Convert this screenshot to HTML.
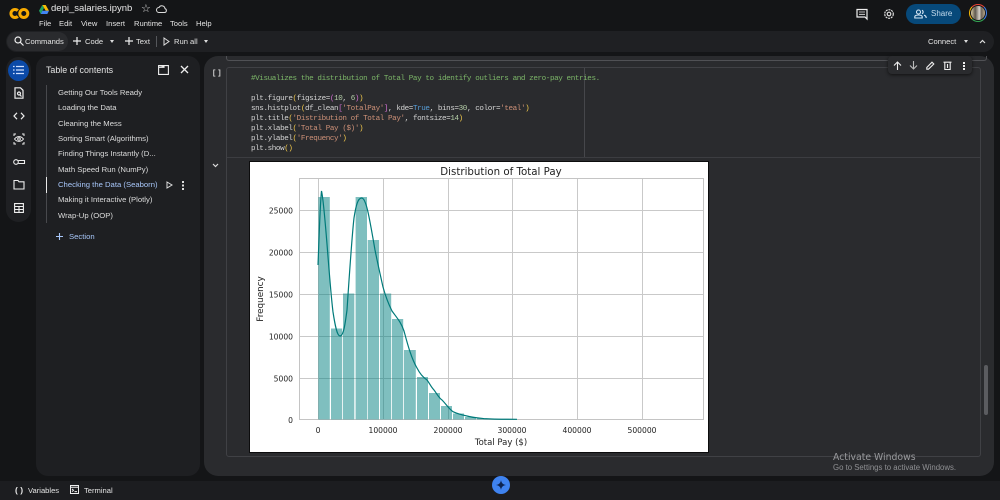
<!DOCTYPE html>
<html><head><meta charset="utf-8">
<style>
html,body{margin:0;padding:0;width:1000px;height:500px;overflow:hidden;background:#141517;font-family:"Liberation Sans",sans-serif;color:#e3e3e3}
.a{position:absolute;white-space:nowrap}
.m{font-size:7.6px;color:#e3e3e3}
.t{font-size:7.7px;color:#dcdcdc}
.c{font-family:"Liberation Mono",monospace;font-size:7.6px;line-height:10px;color:#d4d4d4;white-space:pre;letter-spacing:-.405px}
svg{position:absolute;overflow:visible}
</style></head><body>
<!-- logo -->
<svg style="left:8px;top:7px" width="23" height="13" viewBox="0 0 23 13" fill="none" stroke-width="3"><circle cx="15.800" cy="6.500" r="4" stroke="#f9ab00"/><path d="M9.800 3.700A4 4 0 1 0 9.800 9.300" stroke="#f9ab00"/></svg>
<svg style="left:39px;top:5px" width="10" height="9" viewBox="0 0 10 9"><path d="M3.300 0H6.700L10 5.800H6.700Z" fill="#fbbc04"/><path d="M3.300 0L5 3 1.700 9 0 5.800Z" fill="#1ea362"/><path d="M3.400 5.800H10L8.300 9H1.700Z" fill="#4285f4"/></svg>
<div class="a" style="left:51px;top:3px;font-size:9.500px;color:#e8e8e8">depi_salaries.ipynb</div>
<div class="a" style="left:141px;top:2px;font-size:11px;color:#ddd">☆</div>
<svg style="left:156px;top:4px" width="11" height="9" viewBox="0 0 11 9" fill="none" stroke="#ddd"><path d="M3 8.500H8.500A2 2 0 0 0 9 4.600 3.200 3.200 0 0 0 3 3.500 2.500 2.500 0 0 0 3 8.500Z"/></svg>
<div class="a m" style="left:39px;top:19px">File</div><div class="a m" style="left:59px;top:19px">Edit</div><div class="a m" style="left:81px;top:19px">View</div><div class="a m" style="left:106px;top:19px">Insert</div><div class="a m" style="left:134px;top:19px">Runtime</div><div class="a m" style="left:170px;top:19px">Tools</div><div class="a m" style="left:196px;top:19px">Help</div>
<!-- top right -->
<svg style="left:856px;top:8px" width="12" height="12" viewBox="0 0 12 12" fill="none" stroke="#eee" stroke-width="1.200"><path d="M1 1.500H11V11L9 9H1Z"/><path d="M3 4H9M3 6.300H9" stroke-width=".8"/></svg>
<svg style="left:883px;top:8px" width="12" height="12" viewBox="0 0 12 12" fill="none" stroke="#ddd" stroke-width="1.200"><circle cx="6" cy="6" r="1.800"/><circle cx="6" cy="6" r="4.300" stroke-dasharray="2 .8"/></svg>
<div class="a" style="left:906px;top:4px;width:55px;height:20px;border-radius:10px;background:#07497a"></div>
<svg style="left:914px;top:9px" width="13" height="10" viewBox="0 0 13 10" fill="none" stroke="#d5e6f5" stroke-width="1.100"><circle cx="4.500" cy="3" r="2"/><path d="M.8 9V7.800C.8 6.500 3 6 4.500 6S8.200 6.500 8.200 7.800V9Z"/><path d="M8 1.200A2 2 0 0 1 8 4.800M10 6.200C11.500 6.600 12.200 7.200 12.200 9"/></svg>
<div class="a" style="left:931px;top:9px;font-size:8px;color:#c5dcee">Share</div>
<div class="a" style="left:969px;top:4px;width:18px;height:18px;border-radius:50%;box-sizing:border-box;border:1.200px solid;border-color:#ea4335 #4285f4 #34a853 #fbbc04;background:#141517"></div>
<div class="a" style="left:971px;top:6px;width:14px;height:14px;border-radius:50%;background:linear-gradient(90deg,#d9c9a0 0,#5f5a50 30%,#9a948a 45%,#d8d4cc 60%,#6e6458 75%,#bba98c 100%)"></div>
<!-- toolbar -->
<div class="a" style="left:6px;top:31px;width:988px;height:21px;border-radius:11px;background:#1f2023"></div>
<div class="a" style="left:7px;top:32px;width:61px;height:19px;border-radius:10px;background:#2a2b2e"></div>
<svg style="left:14px;top:36px" width="10" height="10" viewBox="0 0 10 10" fill="none" stroke="#eee" stroke-width="1.200"><circle cx="4" cy="4" r="3"/><path d="M6.200 6.200L9.500 9.500"/></svg>
<div class="a m" style="left:25px;top:37px">Commands</div>
<svg style="left:73px;top:37px" width="8" height="8" viewBox="0 0 8 8" stroke="#eee" stroke-width="1.200"><path d="M4 0V8M0 4H8"/></svg><div class="a m" style="left:85px;top:37px">Code</div>
<div class="a" style="left:110px;top:40px;width:0;height:0;border:2.500px solid transparent;border-top:3px solid #ddd"></div>
<svg style="left:125px;top:37px" width="8" height="8" viewBox="0 0 8 8" stroke="#eee" stroke-width="1.200"><path d="M4 0V8M0 4H8"/></svg><div class="a m" style="left:136px;top:37px">Text</div>
<div class="a" style="left:156px;top:36px;width:1px;height:11px;background:#55575b"></div>
<svg style="left:163px;top:37px" width="7" height="9" viewBox="0 0 7 9" fill="none" stroke="#ddd"><path d="M1 1L6 4.500L1 8Z"/></svg>
<div class="a m" style="left:174px;top:37px">Run all</div>
<div class="a" style="left:204px;top:40px;width:0;height:0;border:2.500px solid transparent;border-top:3px solid #ddd"></div>
<div class="a m" style="left:928px;top:37px">Connect</div>
<div class="a" style="left:964px;top:40px;width:0;height:0;border:2.500px solid transparent;border-top:3px solid #ddd"></div>
<svg style="left:979px;top:39px" width="7" height="5" viewBox="0 0 7 5" fill="none" stroke="#ddd" stroke-width="1.200"><path d="M1 4L3.500 1.500L6 4"/></svg>
<!-- side rail -->
<div class="a" style="left:6px;top:57px;width:25px;height:165px;border-radius:13px;background:#1f2023"></div>
<div class="a" style="left:8px;top:60px;width:21px;height:21px;border-radius:50%;background:#0b4aa8"></div>
<svg style="left:13px;top:65px" width="11" height="10" viewBox="0 0 11 10" stroke="#cfe0ff" stroke-width="1.300"><path d="M3 1.500H11M3 5H11M3 8.500H11M0 1.500H1.600M0 5H1.600M0 8.500H1.600"/></svg>
<svg style="left:14px;top:87px" width="10" height="12" viewBox="0 0 10 12" fill="none" stroke="#eee" stroke-width="1.200"><path d="M1 .8H6.500L9 3.300V11.200H1Z"/><circle cx="5" cy="6.500" r="1.500"/><path d="M6 8L7.500 9.500"/></svg>
<svg style="left:13px;top:112px" width="12" height="8" viewBox="0 0 12 8" fill="none" stroke="#eee" stroke-width="1.200"><path d="M4 .8L1 4L4 7.200M8 .8L11 4L8 7.200"/></svg>
<svg style="left:13px;top:133px" width="12" height="12" viewBox="0 0 12 12" fill="none" stroke="#eee"><path d="M1 3V1H3M9 1H11V3M11 9V11H9M3 11H1V9"/><path d="M1.500 6C4 2.800 8 2.800 10.500 6 8 9.200 4 9.200 1.500 6Z"/><circle cx="6" cy="6" r="1.300"/></svg>
<svg style="left:13px;top:158px" width="12" height="8" viewBox="0 0 12 8" fill="none" stroke="#eee" stroke-width="1.100"><circle cx="3" cy="4" r="2.300"/><path d="M5.300 2.500H11.500V5.500H5.300"/></svg>
<svg style="left:13px;top:179px" width="12" height="11" viewBox="0 0 12 11" fill="none" stroke="#eee" stroke-width="1.100"><path d="M1 1.500H5L6 2.800H11V10H1Z"/></svg>
<svg style="left:14px;top:203px" width="10" height="10" viewBox="0 0 10 10" fill="none" stroke="#eee" stroke-width="1.100"><path d="M.6.600H9.400V9.400H.6ZM.6 3.500H9.400M.6 6.500H9.400M5 3.500V9.400"/></svg>
<!-- TOC -->
<div class="a" style="left:36px;top:56px;width:164px;height:420px;border-radius:12px;background:#1e1f22"></div>
<div class="a" style="left:46px;top:65px;font-size:8.900px;color:#e3e3e3">Table of contents</div>
<svg style="left:158px;top:65px" width="11" height="10" viewBox="0 0 11 10" fill="none" stroke="#eee" stroke-width="1.100"><path d="M.6.600H10.400V9.400H.6Z"/><path d="M.6 2.300H6V.6" fill="#eee"/></svg>
<svg style="left:180px;top:65px" width="9" height="9" viewBox="0 0 9 9" stroke="#eee" stroke-width="1.300"><path d="M1 1L8 8M8 1L1 8"/></svg>
<div class="a" style="left:46px;top:85px;width:1px;height:138px;background:#48494d"></div>
<div class="a" style="left:46px;top:177px;width:1px;height:16px;background:#e8e8e8"></div>
<div class="a t" style="left:58px;top:88px">Getting Our Tools Ready</div>
<div class="a t" style="left:58px;top:103px">Loading the Data</div>
<div class="a t" style="left:58px;top:119px">Cleaning the Mess</div>
<div class="a t" style="left:58px;top:134px">Sorting Smart (Algorithms)</div>
<div class="a t" style="left:58px;top:149px">Finding Things Instantly (D...</div>
<div class="a t" style="left:58px;top:165px">Math Speed Run (NumPy)</div>
<div class="a t" style="left:58px;top:180px;color:#a8c7fa">Checking the Data (Seaborn)</div>
<div class="a t" style="left:58px;top:195px">Making it Interactive (Plotly)</div>
<div class="a t" style="left:58px;top:211px">Wrap-Up (OOP)</div>
<svg style="left:166px;top:181px" width="7" height="8" viewBox="0 0 7 8" fill="none" stroke="#ddd"><path d="M1 1L6 4L1 7Z"/></svg>
<div class="a" style="left:182px;top:181px;width:2px;height:2px;background:#ddd;box-shadow:0 3.500px #ddd,0 7px #ddd"></div>
<svg style="left:56px;top:233px" width="7" height="7" viewBox="0 0 7 7" stroke="#a8c7fa" stroke-width="1.100"><path d="M3.500 0V7M0 3.500H7"/></svg>
<div class="a t" style="left:69px;top:232px;color:#a8c7fa">Section</div>
<!-- main -->
<div class="a" style="left:204px;top:56px;width:790px;height:420px;border-radius:14px;background:#2a2b2e"></div>
<div class="a" style="left:226px;top:56px;width:759px;height:4px;border:1px solid #505155;border-top:0;border-radius:0 0 3px 3px"></div>
<div class="a" style="left:226px;top:67px;width:755px;height:390px;border:1px solid #404145;border-radius:3px;box-sizing:border-box"></div>
<div class="a" style="left:227px;top:157px;width:753px;height:1px;background:#3c3d41"></div>
<div class="a" style="left:584px;top:68px;width:1px;height:89px;background:#46474b"></div>
<div class="a" style="left:212px;top:70px;font-family:'Liberation Mono',monospace;font-size:7px;color:#ddd;font-weight:bold;letter-spacing:-1.500px">[ ]</div>
<svg style="left:212px;top:163px" width="7" height="5" viewBox="0 0 7 5" fill="none" stroke="#ddd" stroke-width="1.200"><path d="M1 1L3.500 3.500L6 1"/></svg>
<div class="a c" style="left:251px;top:74px;color:#7cb668">#Visualizes the distribution of Total Pay to identify outliers and zero-pay entries.</div>
<div class="a c" style="left:251px;top:94px">plt.figure<span style="color:#f2c94c">(</span>figsize=<span style="color:#d070d0">(</span><span style="color:#b5cea8">10</span>, <span style="color:#b5cea8">6</span><span style="color:#d070d0">)</span><span style="color:#f2c94c">)</span>
sns.histplot<span style="color:#f2c94c">(</span>df_clean<span style="color:#d070d0">[</span><span style="color:#ce9178">'TotalPay'</span><span style="color:#d070d0">]</span>, kde=<span style="color:#569cd6">True</span>, bins=<span style="color:#b5cea8">30</span>, color=<span style="color:#ce9178">'teal'</span><span style="color:#f2c94c">)</span>
plt.title<span style="color:#f2c94c">(</span><span style="color:#ce9178">'Distribution of Total Pay'</span>, fontsize=<span style="color:#b5cea8">14</span><span style="color:#f2c94c">)</span>
plt.xlabel<span style="color:#f2c94c">(</span><span style="color:#ce9178">'Total Pay ($)'</span><span style="color:#f2c94c">)</span>
plt.ylabel<span style="color:#f2c94c">(</span><span style="color:#ce9178">'Frequency'</span><span style="color:#f2c94c">)</span>
plt.show<span style="color:#f2c94c">()</span></div>
<!-- cell toolbar -->
<div class="a" style="left:888px;top:56px;width:84px;height:18px;border-radius:4px;background:#2a2b2e;box-shadow:0 1px 3px #111"></div>
<svg style="left:893px;top:61px" width="9" height="9" viewBox="0 0 9 9" fill="none" stroke="#eee" stroke-width="1.100"><path d="M4.500 9V1M1 4.500L4.500 1L8 4.500"/></svg>
<svg style="left:909px;top:61px" width="9" height="9" viewBox="0 0 9 9" fill="none" stroke="#bbb" stroke-width="1.100"><path d="M4.500 0V8M1 4.500L4.500 8L8 4.500"/></svg>
<svg style="left:926px;top:61px" width="9" height="9" viewBox="0 0 9 9" fill="none" stroke="#eee" stroke-width="1.100"><path d="M.8 8.200V6.500L6 1.200L7.800 3L2.500 8.200Z"/></svg>
<svg style="left:943px;top:61px" width="9" height="9" viewBox="0 0 9 9" fill="none" stroke="#eee" stroke-width="1.100"><path d="M1.800 1.500V8.500H7.200V1.500M.5 1.200H8.500M4.500 3V7"/></svg>
<div class="a" style="left:963px;top:62px;width:2px;height:2px;background:#eee;box-shadow:0 3px #eee,0 6px #eee"></div>
<!-- chart -->
<div class="a" style="left:249px;top:161px;width:460px;height:292px;background:#0c0c0d"></div>
<svg style="left:250px;top:162px" width="458" height="290" viewBox="250 162 458 290">
<rect x="250" y="162" width="458" height="290" fill="#fff"/>
<g stroke="#c9c9c9" stroke-width="1"><path d="M318.500 178V419M383.500 178V419M448.500 178V419M512.500 178V419M577.500 178V419M642.500 178V419M299 419.500H703M299 378.500H703M299 336.500H703M299 294.500H703M299 252.500H703M299 210.500H703"/></g>
<rect x="299.500" y="178.500" width="404" height="241" fill="none" stroke="#c4c4c4"/>
<g fill="#008080" fill-opacity=".5">
<rect x="318.300" y="197" width="11.500" height="222.500"/>
<rect x="331" y="328.500" width="11.200" height="91"/>
<rect x="343" y="293.500" width="11.300" height="126"/>
<rect x="355.600" y="197" width="11.400" height="222.500"/>
<rect x="367.700" y="240" width="11.300" height="179.500"/>
<rect x="380" y="293.500" width="11.200" height="126"/>
<rect x="392" y="319" width="11.200" height="100.500"/>
<rect x="404" y="350" width="11.800" height="69.500"/>
<rect x="417" y="377" width="11" height="42.500"/>
<rect x="429" y="393" width="11" height="26.500"/>
<rect x="441" y="406" width="11" height="13.500"/>
<rect x="453" y="413.500" width="11" height="6"/>
<rect x="465" y="417" width="11" height="2.500"/>
<rect x="477" y="418.500" width="11" height="1"/>
</g>
<path d="M318 265C319 240 320 205 321.500 191C325 205 329 280 333 312C335 325 337 336 340 336C343.500 336 345 325 347 310C349 280 352 235 354 218C356 205 358 198 361.700 198C366 198 369 215 375 250C378 265 381 278 383 287C386 298 389 305 392 311C397 318 401 322 404 331C407 342 411 358 417 368C420 374 424 378 427 380C430 384 431 387 434 390C437 394 439 398 442 400C446 404 449 409 453 411.700C458 414 462 415 467 416C472 417.500 478 418 484 418.600C490 419 500 419.300 517 419.300" fill="none" stroke="#007a7a" stroke-width="1.200"/>
<g font-family="'DejaVu Sans',sans-serif" font-size="7.600" fill="#222" text-anchor="end">
<text x="293" y="423">0</text><text x="293" y="381.500">5000</text><text x="293" y="339.500">10000</text><text x="293" y="297.500">15000</text><text x="293" y="255.500">20000</text><text x="293" y="213.500">25000</text>
</g>
<g font-family="'DejaVu Sans',sans-serif" font-size="7.600" fill="#222" text-anchor="middle">
<text x="318" y="433">0</text><text x="383" y="433">100000</text><text x="448" y="433">200000</text><text x="512" y="433">300000</text><text x="577" y="433">400000</text><text x="642" y="433">500000</text>
<text x="501" y="445" font-size="8.500">Total Pay ($)</text>
<text x="501" y="175" font-size="10.250">Distribution of Total Pay</text>
<text transform="translate(263 299) rotate(-90)" font-size="8.800">Frequency</text>
</g>
</svg>
<div class="a" style="left:984px;top:365px;width:4px;height:50px;border-radius:2px;background:#5b5c60"></div>
<!-- bottom -->
<div class="a" style="left:0;top:481px;width:1000px;height:19px;background:#1c1d20"></div>
<div class="a" style="left:15px;top:485px;font-size:8.500px;font-weight:bold;color:#e8e8e8">( )</div>
<div class="a m" style="left:28px;top:486px">Variables</div>
<svg style="left:70px;top:485px" width="9" height="9" viewBox="0 0 9 9" fill="none" stroke="#eee"><path d="M.5.500H8.500V8.500H.5ZM.5 2.300H8.500M2 4L3.500 5.300L2 6.600M4.500 6.600H7"/></svg>
<div class="a m" style="left:84px;top:486px">Terminal</div>
<div class="a" style="left:492px;top:476px;width:18px;height:18px;border-radius:50%;background:#3f83f0"></div>
<svg style="left:496px;top:480px" width="10" height="10" viewBox="0 0 10 10"><path d="M5 0C5.400 3 7 4.600 10 5 7 5.400 5.400 7 5 10 4.600 7 3 5.400 0 5 3 4.600 4.600 3 5 0Z" fill="#0d2350"/></svg>
<div class="a" style="left:833px;top:452px;color:#9a9b9e;font-family:'DejaVu Sans',sans-serif;font-size:9.300px">Activate Windows</div>
<div class="a" style="left:833px;top:463px;color:#8f9093;font-family:'Liberation Sans',sans-serif;font-size:7.800px">Go to Settings to activate Windows.</div>
</body></html>
